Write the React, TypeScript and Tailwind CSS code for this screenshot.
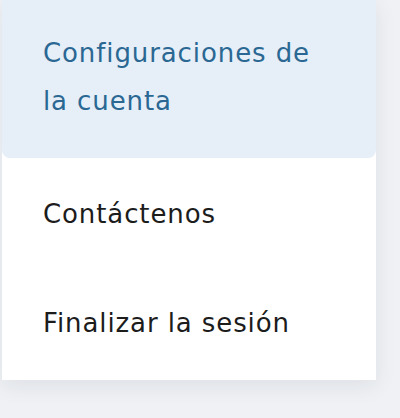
import React from "react";

export default function App() {
  return (
    <div className="w-[400px] h-[418px] bg-[#eff1f4] overflow-hidden" style={{ fontFamily: '"DejaVu Sans", "Noto Sans", sans-serif' }}>
      <div className="ml-[2px] w-[374px] h-[380px] bg-white shadow-[0_6px_20px_rgba(30,40,60,0.08)] flex flex-col">
        <div className="bg-[#e6eef7] rounded-b-lg h-[158px] pl-[41px] pt-[29px]">
          <div className="text-[26px] leading-[48px] tracking-[0.9px] text-[#2a6893]">Configuraciones de<br />la cuenta</div>
        </div>
        <div className="pl-[41px] h-[112px] flex items-center text-[26px] tracking-[0.9px] text-[#1c1c1c]">Contáctenos</div>
        <div className="pl-[41px] h-[106px] flex items-center text-[26px] tracking-[0.9px] text-[#1c1c1c]">Finalizar la sesión</div>
      </div>
    </div>
  );
}
